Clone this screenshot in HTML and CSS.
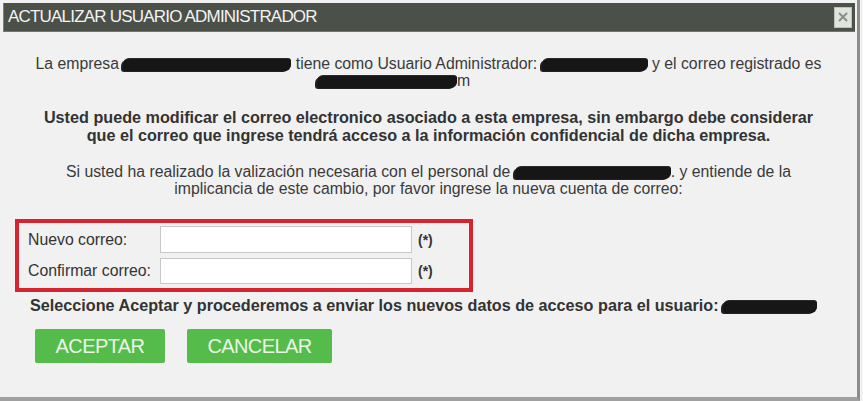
FILE: index.html
```html
<!DOCTYPE html>
<html lang="es">
<head>
<meta charset="utf-8">
<title>Actualizar usuario administrador</title>
<link rel="stylesheet" href="styles.css">
</head>
<body>
<div class="window">
  <div class="titlebar">
    <span class="title">ACTUALIZAR USUARIO ADMINISTRADOR</span>
    <span class="close">
      <svg width="12" height="12" viewBox="0 0 12 12"><path d="M2 2 L10 10 M10 2 L2 10" stroke="#8a8f88" stroke-width="2" fill="none"/></svg>
    </span>
  </div>
  <div class="content">
    <p class="intro">La empresa <span class="blob b1"></span> tiene como Usuario Administrador: <span class="blob b2"></span> y el correo registrado es<br><span class="line2"><span class="blob b3"></span>m</span></p>
    <p class="warn">Usted puede modificar el correo electronico asociado a esta empresa, sin embargo debe considerar<br>que el correo que ingrese tendrá acceso a la información confidencial de dicha empresa.</p>
    <p class="info">Si usted ha realizado la valización necesaria con el personal de <span class="blob b4"></span>. y entiende de la<br>implicancia de este cambio, por favor ingrese la nueva cuenta de correo:</p>
    <div class="formbox">
      <div class="row">
        <label class="lbl" for="nuevo">Nuevo correo:</label>
        <input class="field" id="nuevo" type="text">
        <span class="req">(*)</span>
      </div>
      <div class="row">
        <label class="lbl" for="confirmar">Confirmar correo:</label>
        <input class="field" id="confirmar" type="text">
        <span class="req">(*)</span>
      </div>
    </div>
    <p class="confirm">Seleccione Aceptar y procederemos a enviar los nuevos datos de acceso para el usuario: <span class="blob b5"></span></p>
    <div class="buttons">
      <button class="btn btn-ok">ACEPTAR</button>
      <button class="btn btn-cancel">CANCELAR</button>
    </div>
  </div>
</div>
</body>
</html>
```
FILE: styles.css
```css
html, body {
  margin: 0;
  padding: 0;
  background: #f1f1f1;
}
.window {
  width: 860px;
  height: 401px;
  box-sizing: border-box;
  background: #f1f1f1;
  border-right: 3px solid #8c8c8c;
  border-bottom: 4px solid #a0a0a0;
  padding-top: 3px;
  font-family: "Liberation Sans", Arial, sans-serif;
  color: #333;
}
.titlebar {
  margin: 0 2px 0 3px;
  height: 29px;
  background: #4b5049;
  border-left: 1px solid #6f8a68;
  border-bottom: 1px solid #6d7a69;
  box-sizing: border-box;
  display: flex;
  align-items: center;
  justify-content: space-between;
  padding: 0 3px 0 4px;
}
.title {
  color: #f4f4f4;
  font-size: 17px;
  letter-spacing: -0.8px;
}
.close {
  width: 18px;
  height: 21px;
  background: #dfe4dc;
  border: 1px solid #b9c2b5;
  box-sizing: border-box;
  display: flex;
  align-items: center;
  justify-content: center;
}
p {
  margin: 0;
  text-align: center;
}
.intro {
  margin-top: 23px;
  font-size: 15.8px;
  line-height: 17px;
  color: #3a3a3a;
}
.line2 {
  display: inline-block;
  margin-right: 70px;
}
.blob {
  display: inline-block;
  height: 12px;
  background: #161616;
  border-radius: 6px 3px 6px 3px;
  vertical-align: -2px;
  box-shadow: 0 -1px 0 #2a2a2a, -2px 1px 0 #222;
}
.b1 { width: 168px; }
.b2 { width: 106px; }
.b3 { width: 140px; }
.b4 { width: 156px; }
.b5 { width: 94px; }
.warn {
  margin-top: 19px;
  font-size: 16.2px;
  font-weight: bold;
  line-height: 18px;
  color: #333;
}
.info {
  margin-top: 19px;
  font-size: 15.8px;
  line-height: 17px;
  color: #3a3a3a;
}
.formbox {
  margin: 22px 0 0 15px;
  width: 458px;
  height: 73px;
  box-sizing: border-box;
  border: 4px solid #d8242e;
  padding: 3px 0 0 9px;
  display: flex;
  flex-direction: column;
  gap: 5px;
}
.row {
  display: flex;
  align-items: center;
  font-size: 15.8px;
  color: #333;
}
.lbl {
  width: 132px;
}
.field {
  width: 252px;
  height: 27px;
  box-sizing: border-box;
  margin: 0;
  border: 1px solid #c8c8c8;
  background: #fff;
  padding: 0;
}
.row:nth-child(2) .field {
  height: 26px;
}
.req {
  margin-left: 6px;
  font-weight: bold;
  font-size: 14px;
}
.confirm {
  text-align: left;
  margin: 4px 0 0 30px;
  font-size: 16.2px;
  font-weight: bold;
  color: #333;
}
.buttons {
  display: flex;
  gap: 22px;
  margin: 14px 0 0 35px;
}
.btn {
  height: 34px;
  border: none;
  border-radius: 2px;
  background: #55bb4a;
  color: #e9f6e6;
  font-family: "Liberation Sans", Arial, sans-serif;
  font-size: 20px;
  letter-spacing: -0.6px;
  padding: 0;
}
.btn-ok { width: 130px; }
.btn-cancel { width: 145px; }
```
